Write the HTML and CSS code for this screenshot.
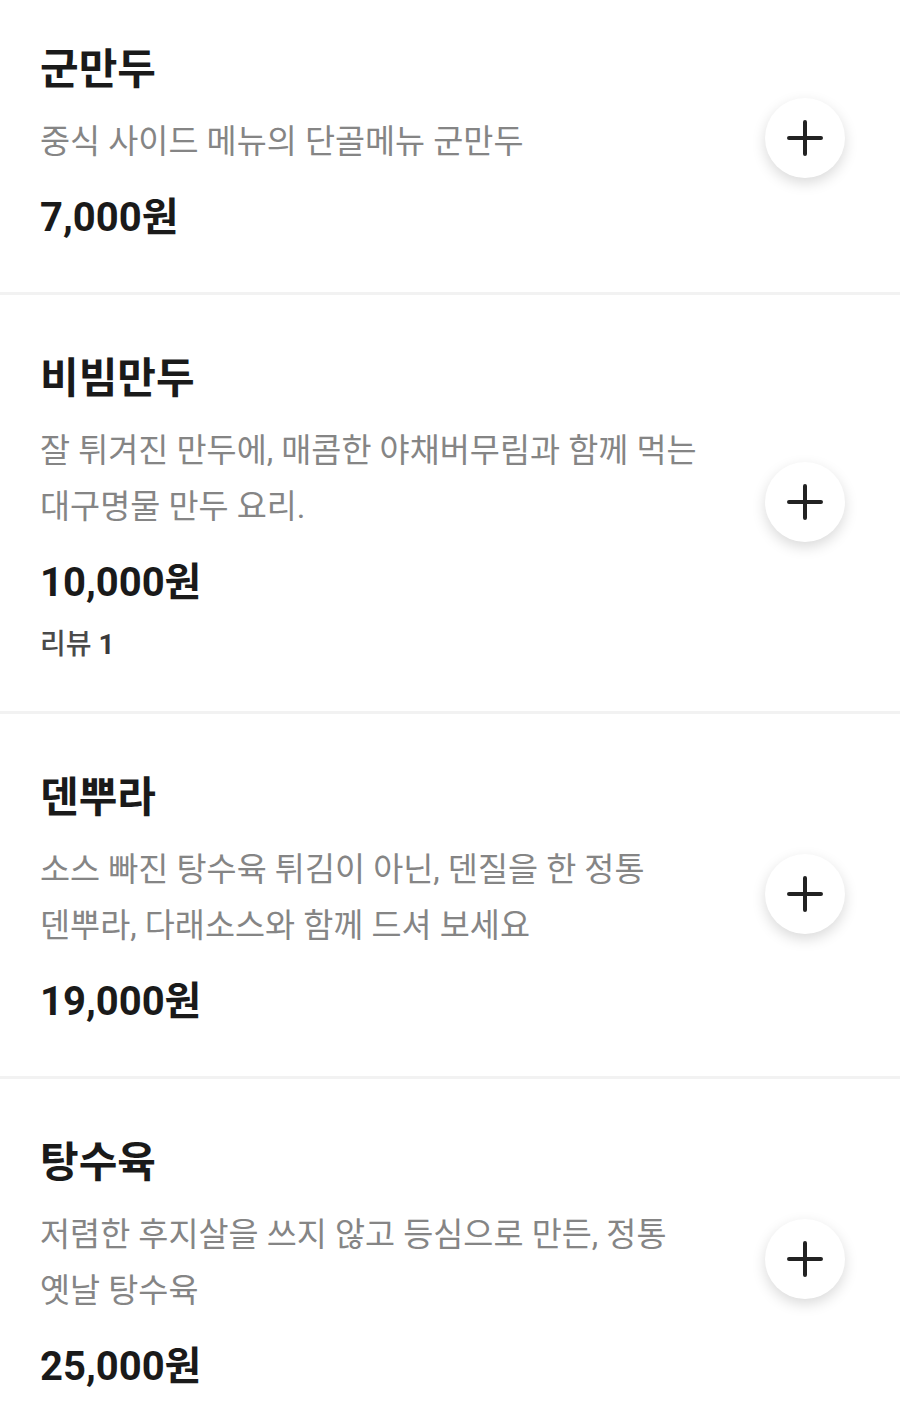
FILE: index.html
```html
<!DOCTYPE html>
<html lang="ko">
<head>
<meta charset="utf-8">
<link rel="stylesheet" href="styles.css">
</head>
<body>
<div class="list">
  <div class="item first">
    <div class="info">
      <div class="name">군만두</div>
      <div class="desc">중식 사이드 메뉴의 단골메뉴 군만두</div>
      <div class="price">7,000원</div>
    </div>
    <button class="add"><svg viewBox="0 0 40 40" width="40" height="40"><path d="M20 4V36M4 20H36" stroke="#222" stroke-width="4" stroke-linecap="round" fill="none"/></svg></button>
  </div>
  <div class="item">
    <div class="info">
      <div class="name">비빔만두</div>
      <div class="desc">잘 튀겨진 만두에, 매콤한 야채버무림과 함께 먹는 대구명물 만두 요리.</div>
      <div class="price">10,000원</div>
      <div class="review">리뷰 <b>1</b></div>
    </div>
    <button class="add"><svg viewBox="0 0 40 40" width="40" height="40"><path d="M20 4V36M4 20H36" stroke="#222" stroke-width="4" stroke-linecap="round" fill="none"/></svg></button>
  </div>
  <div class="item">
    <div class="info">
      <div class="name">덴뿌라</div>
      <div class="desc">소스 빠진 탕수육 튀김이 아닌, 덴질을 한 정통 덴뿌라, 다래소스와 함께 드셔 보세요</div>
      <div class="price">19,000원</div>
    </div>
    <button class="add"><svg viewBox="0 0 40 40" width="40" height="40"><path d="M20 4V36M4 20H36" stroke="#222" stroke-width="4" stroke-linecap="round" fill="none"/></svg></button>
  </div>
  <div class="item">
    <div class="info">
      <div class="name">탕수육</div>
      <div class="desc">저렴한 후지살을 쓰지 않고 등심으로 만든, 정통 옛날 탕수육</div>
      <div class="price">25,000원</div>
    </div>
    <button class="add"><svg viewBox="0 0 40 40" width="40" height="40"><path d="M20 4V36M4 20H36" stroke="#222" stroke-width="4" stroke-linecap="round" fill="none"/></svg></button>
  </div>
</div>
</body>
</html>
```
FILE: styles.css
```css
html, body {
  margin: 0;
  padding: 0;
  background: #fff;
  overflow: hidden;
}
body {
  font-family: Roboto, "Noto Sans CJK KR", sans-serif;
  color: #1a1a1a;
}
.list {
  margin-top: -14px;
}
.item {
  display: flex;
  align-items: center;
  padding: 56px 55px 50px 40px;
  border-bottom: 3px solid #f2f2f2;
}
.info {
  flex: 1;
  min-width: 0;
  word-break: keep-all;
}
.name {
  font-size: 42px;
  font-weight: 700;
  line-height: 56px;
  color: #1a1a1a;
}
.desc {
  margin-top: 16px;
  font-size: 32.7px;
  line-height: 56px;
  color: #858585;
}
.price {
  margin-top: 24px;
  font-size: 40px;
  font-weight: 700;
  line-height: 48px;
  color: #1a1a1a;
}
.review {
  margin-top: 22px;
  font-size: 28px;
  line-height: 32px;
  color: #4a4a4a;
  font-weight: 500;
}
.review b {
  font-weight: 700;
  color: #3a3a3a;
}
.add {
  flex: none;
  width: 80px;
  height: 80px;
  margin-left: 45px;
  margin-bottom: 8px;
  border: none;
  border-radius: 50%;
  background: #fff;
  box-shadow: 0 5px 14px rgba(0, 0, 0, 0.15);
  display: flex;
  align-items: center;
  justify-content: center;
  padding: 0;
}
.add svg {
  display: block;
}
```
